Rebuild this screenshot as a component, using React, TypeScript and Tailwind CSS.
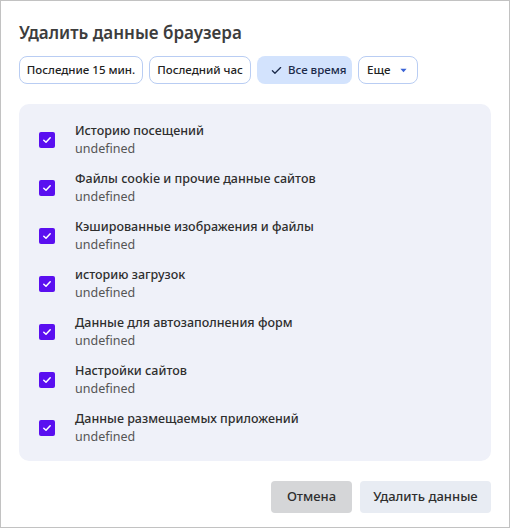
const items = [
  "Историю посещений",
  "Файлы cookie и прочие данные сайтов",
  "Кэшированные изображения и файлы",
  "историю загрузок",
  "Данные для автозаполнения форм",
  "Настройки сайтов",
  "Данные размещаемых приложений",
];

function Check() {
  return (
    <div className="w-4 h-4 rounded-[2px] bg-[#5a0ff0] flex items-center justify-center shrink-0">
      <svg width="10" height="10" viewBox="0 0 10 10" fill="none">
        <path d="M1.8 5.2 L4 7.3 L8.2 2.8" stroke="white" strokeWidth="1.5" strokeLinecap="round" strokeLinejoin="round" />
      </svg>
    </div>
  );
}

export default function App() {
  return (
    <div
      className="w-[510px] h-[528px] border border-[#c2c2c2] bg-white px-[18px] pt-5 text-[#333]"
      style={{ fontFamily: '"Noto Sans", "Open Sans", sans-serif' }}
    >
      <h1 className="text-[17px] leading-6 font-semibold text-[#3d3d3d]">Удалить данные браузера</h1>

      <div className="flex gap-[6px] mt-[11px] text-[11.5px] font-medium text-[#222]">
        <button className="h-7 w-[124px] rounded-lg border border-[#b9cdf3] bg-white">Последние 15 мин.</button>
        <button className="h-7 w-[102px] rounded-lg border border-[#b9cdf3] bg-white">Последний час</button>
        <button className="h-7 w-[95px] pl-[14px] rounded-lg bg-[#d3e3fd] text-[#1b2a4a] flex items-center gap-[6px]">
          <svg width="11" height="11" viewBox="0 0 12 12" fill="none">
            <path d="M1.5 6.3 L4.3 9 L10.5 2.8" stroke="#1b2a4a" strokeWidth="1.4" strokeLinecap="round" strokeLinejoin="round" />
          </svg>
          Все время
        </button>
        <button className="h-7 w-[60px] pl-[8px] rounded-lg border border-[#b9cdf3] bg-white flex items-center gap-[10px]">
          Еще
          <svg width="7" height="5" viewBox="0 0 8 5">
            <path d="M0.5 0.5 L7.5 0.5 L4 4.5 Z" fill="#3b63d6" />
          </svg>
        </button>
      </div>

      <div className="mt-5 rounded-[10px] bg-[#eff1f9] pt-[18px] pb-[15px] pl-5 flex flex-col gap-3">
        {items.map((t) => (
          <div key={t} className="flex items-center gap-5">
            <Check />
            <div className="text-[12.5px] leading-[18px]">
              <div className="font-medium text-[#2e2e2e]">{t}</div>
              <div className="text-[#555]">undefined</div>
            </div>
          </div>
        ))}
      </div>

      <div className="flex justify-end gap-2 mt-5 text-[13px] font-medium text-[#2e2e2e]">
        <button className="h-8 w-[81px] rounded bg-[#d5d6d8]">Отмена</button>
        <button className="h-8 w-[131px] rounded bg-[#e8ecf3]">Удалить данные</button>
      </div>
    </div>
  );
}
